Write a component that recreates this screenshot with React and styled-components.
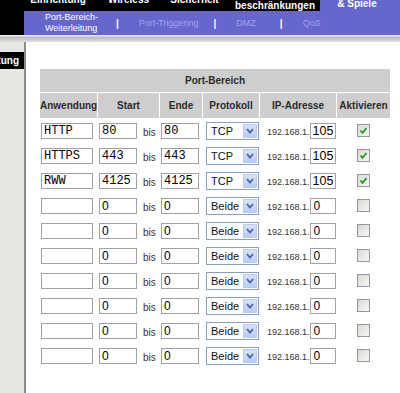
import React from 'react';
import styled, { createGlobalStyle } from 'styled-components';

const GlobalStyle = createGlobalStyle`
  body {
    margin: 0;
    background: #fff;
    font-family: "Liberation Sans", Arial, sans-serif;
    overflow: hidden;
  }
`;

const tabs = [
  { label: 'Einrichtung', w: 80 },
  { label: 'Wireless', w: 61 },
  { label: 'Sicherheit', w: 71 },
  { label: 'Zugriffs-\nbeschränkungen', w: 90 },
  { label: 'Anwendungen\n& Spiele', w: 80, active: true },
];

const rows = [
  { app: 'HTTP', start: '80', end: '80', proto: 'TCP', ip: '105', on: true },
  { app: 'HTTPS', start: '443', end: '443', proto: 'TCP', ip: '105', on: true },
  { app: 'RWW', start: '4125', end: '4125', proto: 'TCP', ip: '105', on: true },
  ...Array.from({ length: 7 }, () => ({ app: '', start: '0', end: '0', proto: 'Beide', ip: '0', on: false })),
];

function App() {
  return (
    <>
      <GlobalStyle />
      <TopBar>
        <TopRow>
          {tabs.map(t => (
            <Tab key={t.label} $w={t.w} $active={t.active}>{t.label}</Tab>
          ))}
        </TopRow>
      </TopBar>

      <SubBar>
        <SubMenu>
          <SubItem $active>Port-Bereich-<br />Weiterleitung</SubItem>
          <Sep $ml={18}>|</Sep>
          <SubItem $ml={20}>Port-Triggering</SubItem>
          <Sep $ml={15}>|</Sep>
          <SubItem $ml={20}>DMZ</SubItem>
          <Sep $ml={24}>|</Sep>
          <SubItem $ml={20}>QoS</SubItem>
        </SubMenu>
      </SubBar>
      <Band />

      <Body>
        <Side>
          <SideLabel>Port-Bereich-Weiterleitung</SideLabel>
        </Side>
        <Main>
          <Table>
            <colgroup>
              <Col $w={57} />
              <Col $w={62} />
              <Col $w={43} />
              <Col $w={57} />
              <Col $w={77} />
              <Col $w={54} />
            </colgroup>
            <thead>
              <tr>
                <TitleCell colSpan={6}>Port-Bereich</TitleCell>
              </tr>
              <tr>
                <ColHead $first>Anwendung</ColHead>
                <ColHead>Start</ColHead>
                <ColHead>Ende</ColHead>
                <ColHead>Protokoll</ColHead>
                <ColHead>IP-Adresse</ColHead>
                <ColHead>Aktivieren</ColHead>
              </tr>
            </thead>
            <tbody>
              {rows.map((r, i) => (
                <tr key={i}>
                  <Td>
                    <CellBox $pl={1}>
                      <Field readOnly value={r.app} $w={52} $mono />
                    </CellBox>
                  </Td>
                  <Td>
                    <CellBox $pl={2}>
                      <Field readOnly value={r.start} $w={38} $mono={r.on} />
                      <Bis>bis</Bis>
                    </CellBox>
                  </Td>
                  <Td>
                    <CellBox $pl={2}>
                      <Field readOnly value={r.end} $w={38} $mono={r.on} />
                    </CellBox>
                  </Td>
                  <Td>
                    <CellBox $pl={4}>
                      <Dropdown>
                        <DropLabel>{r.proto}</DropLabel>
                        <DropButton>
                          <svg width="8" height="6" viewBox="0 0 8 6">
                            <polyline points="1,1 4,4.5 7,1" fill="none" stroke="#4a64a8" strokeWidth="1.8" />
                          </svg>
                        </DropButton>
                      </Dropdown>
                    </CellBox>
                  </Td>
                  <Td>
                    <CellBox $pl={8}>
                      <IpPrefix>192.168.1.</IpPrefix>
                      <Field readOnly value={r.ip} $w={26} $fs={r.on ? 12.5 : 12} $pad={r.on ? 2 : 3} />
                    </CellBox>
                  </Td>
                  <Td>
                    <CellBox $center>
                      <Check>
                        {r.on && (
                          <svg width="9" height="9" viewBox="0 0 9 9">
                            <polyline points="1.5,4.5 3.5,6.8 7.5,2" fill="none" stroke="#1f9a24" strokeWidth="1.8" />
                          </svg>
                        )}
                      </Check>
                    </CellBox>
                  </Td>
                </tr>
              ))}
            </tbody>
          </Table>
        </Main>
      </Body>
    </>
  );
}

export default App;

const TopBar = styled.div`
  height: 11px;
  background: #000;
  overflow: hidden;
`;

const TopRow = styled.div`
  display: flex;
  height: 36px;
  margin-top: -18px;
  padding-left: 18px;
`;

const Tab = styled.div`
  flex: none;
  width: ${p => p.$w}px;
  display: flex;
  align-items: center;
  justify-content: center;
  box-sizing: border-box;
  padding-bottom: ${p => (p.$active ? 4 : 0)}px;
  padding-right: ${p => (p.$active ? 6 : 0)}px;
  white-space: pre-line;
  text-align: center;
  color: #fff;
  font-weight: bold;
  font-size: 10px;
  line-height: 12px;
  background: ${p => (p.$active ? '#6666cc' : '#000')};
`;

const SubBar = styled.div`
  display: flex;
  height: 24px;
  background: #000;
  padding-left: 24px;
`;

const SubMenu = styled.div`
  flex: 1;
  display: flex;
  align-items: center;
  padding-left: 21px;
  background: #6666cc;
`;

const SubItem = styled.div`
  margin-left: ${p => p.$ml || 0}px;
  color: ${p => (p.$active ? '#fff' : '#a3a3f0')};
  font-size: 9px;
  line-height: 11px;
`;

const Sep = styled.span`
  margin-left: ${p => p.$ml}px;
  color: #fff;
  font-weight: bold;
  font-size: 10px;
`;

const Band = styled.div`
  height: 7px;
  background: linear-gradient(#ececf4 0, #ececf4 1px, #b9b9b9 2px, #c9c9c9 4px, #e2e2e2 7px);
`;

const Body = styled.div`
  display: flex;
  height: 351px;
`;

const Side = styled.div`
  flex: none;
  width: 24px;
  padding-top: 10px;
  box-sizing: border-box;
  background: #e7e7e4;
`;

const SideLabel = styled.div`
  height: 17px;
  display: flex;
  align-items: center;
  justify-content: flex-end;
  padding-right: 5px;
  overflow: hidden;
  white-space: nowrap;
  background: #000;
  color: #fff;
  font-weight: bold;
  font-size: 10px;
`;

const Main = styled.main`
  flex: 1;
  border-left: 2px solid #8c8c8c;
  background: #fff;
  padding: 27px 0 0 14px;
`;

const Table = styled.table`
  width: 350px;
  table-layout: fixed;
  border-collapse: separate;
  border-spacing: 0;
`;

const Col = styled.col`
  width: ${p => p.$w}px;
`;

const TitleCell = styled.th`
  height: 23px;
  padding: 0;
  border-bottom: 1px solid #fff;
  background: #cecece;
  color: #2b2b2b;
  font-size: 10px;
  font-weight: bold;
  text-align: center;
`;

const ColHead = styled.th`
  height: 25px;
  padding: 0;
  border-left: ${p => (p.$first ? 'none' : '1px solid #fff')};
  background: #cecece;
  color: #2b2b2b;
  font-size: 10px;
  font-weight: bold;
  text-align: center;
  white-space: nowrap;
`;

const Td = styled.td`
  height: 25px;
  padding: 0;
  vertical-align: middle;
`;

const CellBox = styled.div`
  display: flex;
  align-items: center;
  justify-content: ${p => (p.$center ? 'center' : 'flex-start')};
  padding-left: ${p => p.$pl || 0}px;
`;

const Field = styled.input`
  box-sizing: border-box;
  width: ${p => p.$w}px;
  height: 16px;
  margin: 0;
  padding: 0 0 0 ${p => (p.$pad != null ? p.$pad : 2)}px;
  border: 1px solid #a2a2a2;
  background: #fff;
  color: #000;
  font-family: ${p => (p.$mono ? '"Liberation Mono", "Courier New", monospace' : '"Liberation Sans", Arial, sans-serif')};
  font-size: ${p => p.$fs || 12}px;
  outline: none;
`;

const Bis = styled.span`
  margin-left: 6px;
  padding-top: 3px;
  color: #333;
  font-size: 10px;
`;

const Dropdown = styled.div`
  box-sizing: border-box;
  width: 53px;
  height: 18px;
  display: flex;
  align-items: center;
  padding-left: 4px;
  border: 1px solid #8aa0bd;
  background: #fff;
`;

const DropLabel = styled.span`
  flex: 1;
  color: #111;
  font-size: 11px;
`;

const DropButton = styled.span`
  box-sizing: border-box;
  width: 14px;
  height: 14px;
  margin-right: 1px;
  display: flex;
  align-items: center;
  justify-content: center;
  border: 1px solid #b8cbf2;
  background: linear-gradient(#d6e2fd, #b9cdf9);
`;

const IpPrefix = styled.span`
  color: #333;
  font-size: 9px;
  padding-top: 2px;
`;

const Check = styled.span`
  box-sizing: border-box;
  width: 13px;
  height: 13px;
  display: flex;
  align-items: center;
  justify-content: center;
  border: 1px solid #8e9aa3;
  background: linear-gradient(135deg, #d9d9d4, #f7f7f5);
`;
